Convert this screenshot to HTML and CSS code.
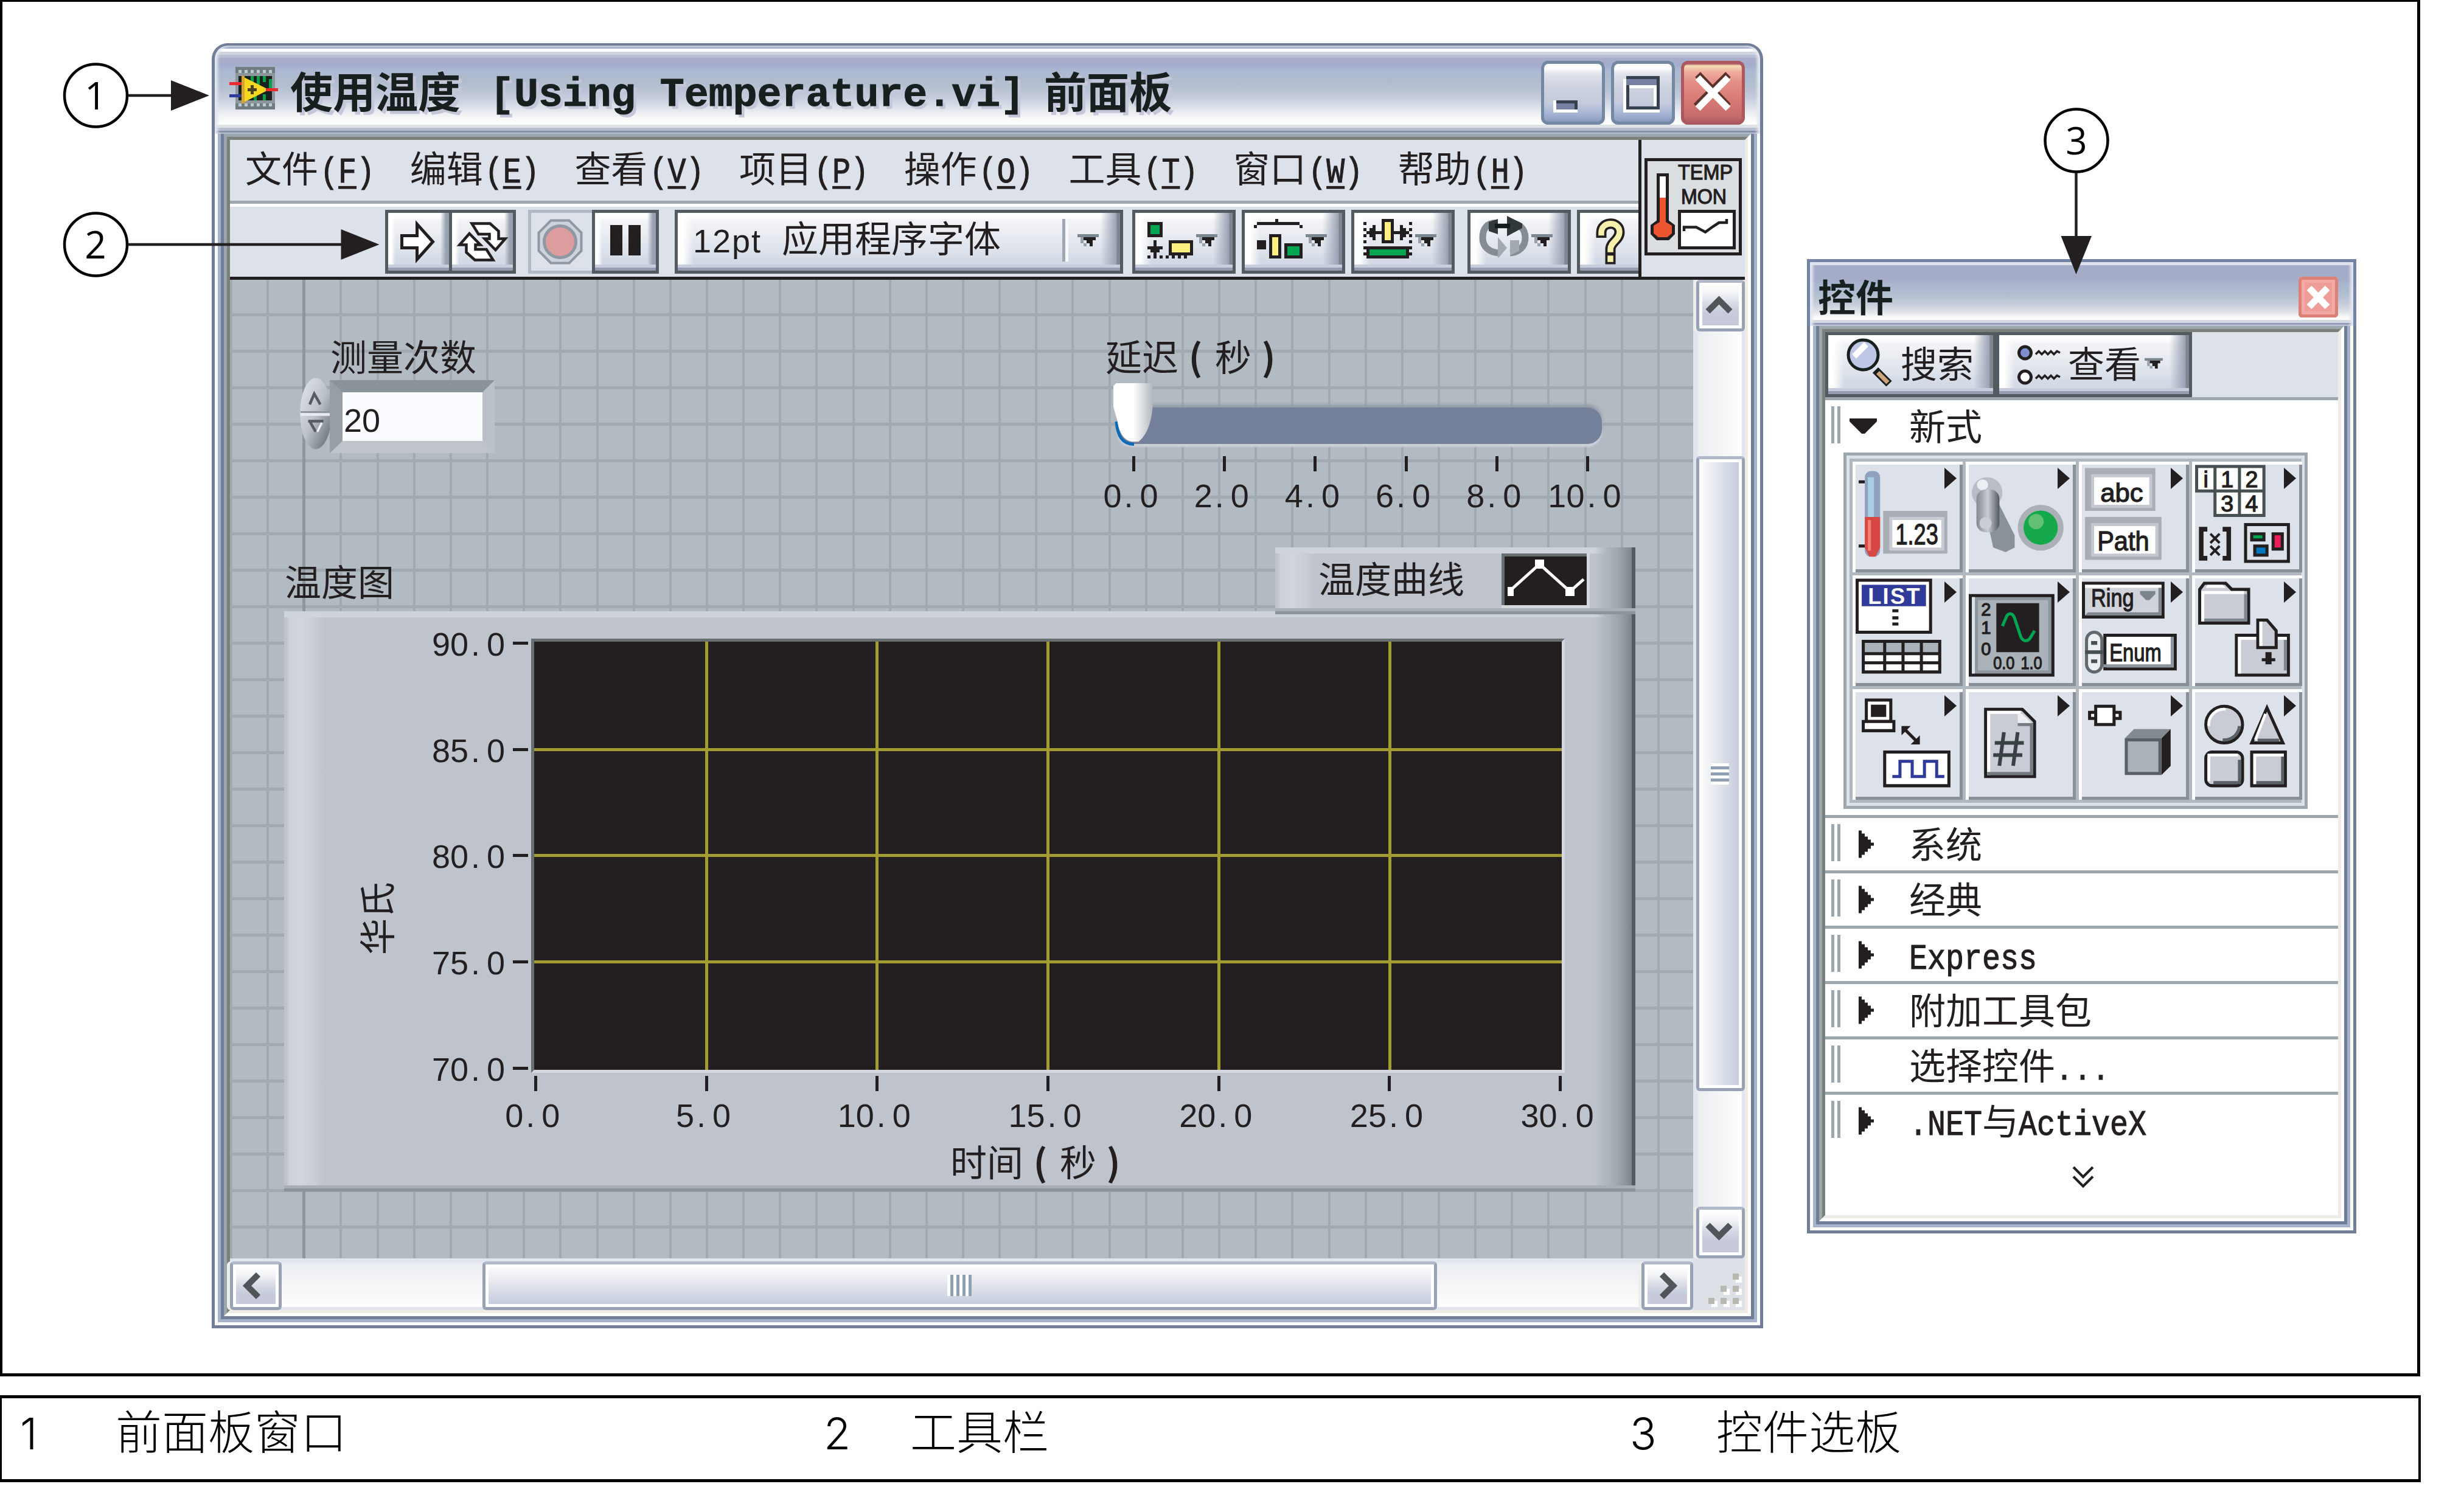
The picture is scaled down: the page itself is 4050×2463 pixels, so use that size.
FILE: index.html
```html
<!DOCTYPE html>
<html lang="zh-CN">
<head>
<meta charset="utf-8">
<title>前面板</title>
<link rel="stylesheet" href="styles.css">
</head>
<body>
<svg class="defs" width="0" height="0">
  <defs>
    <symbol id="drop" viewBox="0 0 7 5"><path d="M0 0H7V1H0Z" fill="#7d8790"/><path d="M1 1H2V3H3V4H2V3H1Z" fill="#98a1ac"/><path d="M2 1H6V2H5V4H4V3H3V2H2Z" fill="#231f20"/><path d="M3 1H5V4H4V3H3Z" fill="#231f20"/></symbol>
    <symbol id="more" viewBox="0 0 5 9"><path d="M0 0H1V1H2V2H3V3H4V4H5V5H4V6H3V7H2V8H1V9H0Z" fill="#231f20"/></symbol>
    <symbol id="chev" viewBox="0 0 9 6"><path d="M.8 5.2 4.5 1.5 8.2 5.2" fill="none" stroke="#4f5558" stroke-width="2"/></symbol>
    <linearGradient id="lever" x1="0" x2="1"><stop offset="0" stop-color="#83898f"/><stop offset=".5" stop-color="#c9ccd3"/><stop offset="1" stop-color="#52595d"/></linearGradient>
    <linearGradient id="knob" x1="0" x2="1"><stop offset="0" stop-color="#fff"/><stop offset=".5" stop-color="#fff"/><stop offset="1" stop-color="#b4b9c0"/></linearGradient>
    <linearGradient id="spin" x1="0" x2="1" y1="0" y2="1"><stop offset="0" stop-color="#e4e7ec"/><stop offset=".5" stop-color="#bcc1cb"/><stop offset="1" stop-color="#5c6269"/></linearGradient>
  </defs>
</svg>

<main class="page">
  <section class="figure">

    <div class="window vi-window">
      <header class="titlebar">
        <svg class="vi-icon" viewBox="0 0 16 14" shape-rendering="crispEdges">
          <path d="M2 0H15V14H2Z" fill="#717b80"/><path d="M2 2H15V12H2Z" fill="#8d969c"/>
          <path d="M3 1.5H15M3 12.5H15" stroke="#b7cbd3" stroke-dasharray="1 1"/>
          <path d="M3 3H14V11H3Z" fill="#19211f"/><path d="M7.5 3V6M9.5 3V7M11.5 3V5M13.5 4V7M8.500 9V11M11.500 9V11" stroke="#0aa04b"/>
          <path d="M4 3 13 7.500 4 12Z" fill="#f6d821" shape-rendering="auto"/><path d="M4 3H5V12H4Z" fill="#d9a42f"/>
          <path d="M7.500 6V9M6 7.500H9" stroke="#4b4220"/>
          <path d="M0 5.500H4M12 7.500H16" stroke="#ed2a2f"/><path d="M0 9.500H4" stroke="#303a98"/>
        </svg>
        <h1 class="title">使用温度<span class="mono"> [Using Temperature.vi] </span>前面板</h1>
        <div class="winbtns">
          <svg class="winbtn" viewBox="0 0 21 21" shape-rendering="crispEdges"><path d="M4 13H5V16H12V17H4Z" fill="#fff"/><path d="M5 13H12V16H5Z" fill="#36424e"/><path d="M5 14H11V16H5Z" fill="#7780a3"/></svg>
          <svg class="winbtn" viewBox="0 0 21 21" shape-rendering="crispEdges"><path d="M4 6H5V16H16V17H4Z" fill="#fff"/><path d="M5.500 5.500H15.500V15.500H5.500Z" fill="none" stroke="#36424e"/><path d="M5 6H15V8H5Z" fill="#7780a3"/><path d="M6 8H15V15H14V9H6Z" fill="#fff"/></svg>
          <svg class="winbtn winbtn-close" viewBox="0 0 21 21"><path d="M5.500 4.500 15.500 15M15.500 4.500 5 15" stroke="#5a322c" stroke-width="2.400"/><path d="M5.500 5.500 15.500 15.700M15.500 5.500 5.500 15.700" stroke="#fff" stroke-width="2.200"/></svg>
        </div>
      </header>
      <div class="frame"><div class="bevel"><div class="content">
        <div class="top">
          <div class="bars">
            <nav class="menubar">
              <span class="menu">文件<span class="mono">(<u>F</u>)</span></span>
              <span class="menu">编辑<span class="mono">(<u>E</u>)</span></span>
              <span class="menu">查看<span class="mono">(<u>V</u>)</span></span>
              <span class="menu">项目<span class="mono">(<u>P</u>)</span></span>
              <span class="menu">操作<span class="mono">(<u>O</u>)</span></span>
              <span class="menu">工具<span class="mono">(<u>T</u>)</span></span>
              <span class="menu">窗口<span class="mono">(<u>W</u>)</span></span>
              <span class="menu">帮助<span class="mono">(<u>H</u>)</span></span>
            </nav>
            <div class="toolbar">
              <div class="btn run"><svg viewBox="1 1 20 19"><path d="M5.500 8.500H10.500V4.700L15.700 10.500 10.500 16.300V12.500H5.500Z" fill="#fff" stroke="#231f20"/></svg></div>
              <div class="btn cont"><svg viewBox="1 1 20 19"><g fill="#fff" stroke="#231f20" stroke-width=".9"><path id="loop" d="M7.500 4.500H13.500L16.300 7V9.500H18.500L15.300 13.200 11.700 9.500H13.300V8H9.700Z"/><use href="#loop" transform="rotate(180 11 10.500)"/></g></svg></div>
              <div class="btn abort"><svg viewBox="1 1 19 19"><path d="M7.500 3.500H13.500L17.500 7.500V13.500L13.500 17.500H7.500L3.500 13.500V7.500Z" fill="#cdd3da" stroke="#8f99a4" stroke-width=".8"/><circle cx="10.500" cy="10.500" r="5.200" fill="#dd9d9f" stroke="#8f99a4"/></svg></div>
              <div class="btn pause"><svg viewBox="1 1 20 19" shape-rendering="crispEdges"><path d="M6 5H10V15H6ZM12 5H16V15H12Z" fill="#231f20"/></svg></div>
              <div class="btn fontring"><span class="ringtext"><span class="num">12pt</span>应用程序字体</span><span class="split"></span><svg class="caret"><use href="#drop"/></svg></div>
              <div class="btn tool align"><svg viewBox="1 1 32 19" shape-rendering="crispEdges"><path d="M5 4H10V9H5Z" fill="#231f20"/><path d="M6 5H9V8H6Z" fill="#00a551"/><path d="M7 10H8V12H10V13H9V14H8V15H7V14H6V13H5V12H7Z" fill="#231f20"/><path d="M5 15.500H19" stroke="#231f20" stroke-dasharray="1 1"/><path d="M12 10H20V15H12Z" fill="#231f20"/><path d="M13 11H19V14H13Z" fill="#fbf080"/><use href="#drop" x="21" y="8" width="7" height="5"/></svg></div>
              <div class="btn tool"><svg viewBox="1 1 32 19" shape-rendering="crispEdges"><path d="M4 6V5H5V4H11V3H12V4H19V5H20V6H19V5H5V6Z" fill="#231f20"/><path d="M5 10H8V13H5ZM9 8H13V16H9ZM14 11H20V16H14Z" fill="#231f20"/><path d="M10 9H12V15H10Z" fill="#fbf080"/><path d="M15 12H19V15H15Z" fill="#00a551"/><use href="#drop" x="21" y="8" width="7" height="5"/></svg></div>
              <div class="btn tool"><svg viewBox="1 1 32 19" shape-rendering="crispEdges"><path d="M4.500 4V11M19.500 4V11" stroke="#231f20" stroke-dasharray="1 1"/><path d="M10 3H14V11H10ZM5 7H6V6H7V5H8V7H16V5H17V6H18V7H19V8H18V9H17V10H16V8H8V10H7V9H6V8H5ZM4 12H20V13H19V14H20V15H19V16H5V15H4V14H5V13H4Z" fill="#231f20"/><path d="M11 4H13V10H11Z" fill="#fbf080"/><path d="M6 13H18V15H6Z" fill="#00a551"/><use href="#drop" x="21" y="8" width="7" height="5"/></svg></div>
              <div class="btn tool reorder"><svg viewBox="1 1 32 19"><path d="M10.500 14.200C7 14 5 12 5 9.300 5 6 6.500 4.300 9.500 4.300" fill="none" stroke="#858d94" stroke-width="2.200"/><path d="M13.500 4.300C17 4.300 19 6 19 9.300 19 12 17 14 14 14.200" fill="none" stroke="#858d94" stroke-width="2.200"/><path d="M7 4 10 3V8L7 7ZM13 2 18 4.500V6L13 8.700Z" fill="#303839"/><path d="M9 5.300H14" stroke="#111b1b" stroke-width="1.500"/><path d="M10 9V16L13 12.500ZM14 10H17V13.500L14 15Z" fill="#a3a9b0"/><use href="#drop" x="21" y="8" width="7" height="5"/></svg></div>
              <div class="btn tool help"><svg viewBox="1 1 32 19"><g fill="none" stroke-linecap="square"><path d="M8 7.500C8 3.600 14 3.600 14 7.300 14 10 11 10.500 11 13M11 16V16.200" stroke="#231f20" stroke-width="3.400"/><path d="M8 7.500C8 3.600 14 3.600 14 7.300 14 10 11 10.500 11 13M11 16V16.200" stroke="#f7f0ad" stroke-width="1.900"/></g></svg></div>
            </div>
          </div>
          <div class="iconpane">
            <svg viewBox="0 0 32 32">
              <path d="M.5.500H31.500V31.500H.5Z" fill="#dadee1" stroke="#231f20"/>
              <path d="M4 5H8V20.500L10 22V25L8 27H4L2 25V22L4 20.500Z" fill="#231f20"/><path d="M5 6H7V13H5Z" fill="#fff"/><path d="M5 13H7V21L9 22.200V24.700L7.500 26H4.500L3 24.700V22.200L5 21Z" fill="#eb5530"/>
              <path d="M11.500 17.500H29.500V29.500H11.500Z" fill="#fff" stroke="#231f20"/><path d="M13 24V22.700H17L20 24.300 22.500 22.500 24.500 21.200H27V20" fill="none" stroke="#231f20" stroke-width=".9"/>
              <text class="px" x="11" y="7" font-size="7" textLength="18" lengthAdjust="spacingAndGlyphs">TEMP</text>
              <text class="px" x="12" y="15" font-size="7" textLength="15" lengthAdjust="spacingAndGlyphs">MON</text>
            </svg>
          </div>
        </div>

        <div class="work">
          <div class="panel">
            <div class="label count-label">测量次数</div>
            <svg class="spinner" viewBox="0 0 11 24"><ellipse cx="5.500" cy="12" rx="5.200" ry="11.700" fill="url(#spin)"/><path d="M.5 12.300H10.500" stroke="#e9ebf0" stroke-width=".9"/><path d="M.5 11.500H10.500" stroke="#8f959d" stroke-width=".6"/><path d="M3.500 9 5 5.500 7 9" fill="none" stroke="#555b61" stroke-width=".9"/><path d="M3 14.500H8M3.500 14.500 5.500 18" stroke="#555b61" stroke-width=".9"/><path d="M6 18 7.500 15" stroke="#eef0f4" stroke-width=".7"/></svg>
            <div class="numeric num">20</div>

            <div class="label delay-label">延迟<span class="paren">(</span>秒<span class="paren">)</span></div>
            <div class="slider"></div>
            <svg class="thumb" viewBox="0 0 14 21"><path d="M1 13C1.500 18 3 20.700 7 20.700" fill="none" stroke="#0b6bb6" stroke-width="1"/><path d="M1 0H12.500L13.300 1V8C12.800 14 11 18 8.500 19.800H6.500C3.700 19.500 2 17 1.400 13L0 8V1Z" fill="url(#knob)"/></svg>
            <div class="scale num">
              <span>0<i>.</i>0</span><span>2<i>.</i>0</span><span>4<i>.</i>0</span><span>6<i>.</i>0</span><span>8<i>.</i>0</span><span>10<i>.</i>0</span>
            </div>

            <div class="label graph-label">温度图</div>
            <div class="graph">
              <div class="yaxis num"><span>90<i>.</i>0</span><span>85<i>.</i>0</span><span>80<i>.</i>0</span><span>75<i>.</i>0</span><span>70<i>.</i>0</span></div>
              <div class="plot"></div>
              <div class="xaxis num"><span>0<i>.</i>0</span><span>5<i>.</i>0</span><span>10<i>.</i>0</span><span>15<i>.</i>0</span><span>20<i>.</i>0</span><span>25<i>.</i>0</span><span>30<i>.</i>0</span></div>
              <div class="label xtitle">时间<span class="paren">(</span>秒<span class="paren">)</span></div>
              <div class="label ytitle">华氏</div>
            </div>
            <div class="plotlegend"><span class="label">温度曲线</span>
              <svg viewBox="0 0 29 18" shape-rendering="crispEdges"><path d="M0 0H29V18H0Z" fill="#d4d7dd"/><path d="M0 0H28V17H0Z" fill="#666e70"/><path d="M1 1H28V17H1Z" fill="#231f20"/><path d="M2.500 12.500 12.500 3.500 22.500 12.500 27 8.500" fill="none" stroke="#fff" shape-rendering="auto"/><path d="M2 11H4V14H2ZM11 2H14V5H11ZM21 11H24V14H21Z" fill="#fff"/></svg>
            </div>
          </div>

          <div class="vscroll">
            <div class="sbtn"><svg viewBox="0 0 9 6"><use href="#chev"/></svg></div>
            <div class="vthumb"><span></span></div>
            <div class="sbtn"><svg class="r180" viewBox="0 0 9 6"><use href="#chev"/></svg></div>
          </div>
          <div class="hscroll">
            <div class="sbtn"><svg class="r270" viewBox="0 0 9 6"><use href="#chev"/></svg></div>
            <div class="hthumb"><span></span></div>
            <div class="sbtn"><svg class="r90" viewBox="0 0 9 6"><use href="#chev"/></svg></div>
          </div>
          <div class="corner"><svg viewBox="0 0 17 17" shape-rendering="crispEdges"><path d="M14 6H16V8H14ZM10 10H12V12H10ZM14 10H16V12H14ZM6 14H8V16H6ZM10 14H12V16H10ZM14 14H16V16H14Z" fill="#fff"/><path d="M13 5H15V7H13ZM9 9H11V11H9ZM13 9H15V11H13ZM5 13H7V15H5ZM9 13H11V15H9ZM13 13H15V15H13Z" fill="#b8b8b2"/></svg></div>
        </div>
      </div></div></div>
    </div>

    <div class="window palette">
      <header class="titlebar small">
        <h2 class="title">控件</h2>
        <svg class="pclose" viewBox="0 0 13 13"><path d="M3.500 3.500 9.500 9.700M9.500 3.500 3.500 9.700" stroke="#fff" stroke-width="2.200"/></svg>
      </header>
      <div class="frame"><div class="bevel"><div class="content">
        <div class="ptools">
          <div class="btn search"><svg viewBox="0 0 15 16"><circle cx="5.500" cy="5.500" r="4.900" fill="#bfc7e6" stroke="#17201f"/><path d="M2.500 6 6.500 2" stroke="#fff" stroke-width="2"/><path d="M9.500 10.500 14 15" stroke="#17201f" stroke-width="2.600"/><path d="M10.300 11.300 13.600 14.600" stroke="#cfa37b" stroke-width="1.400"/></svg><span>搜索</span></div>
          <div class="btn view"><svg viewBox="0 0 14 13"><circle cx="2.500" cy="2.500" r="2" fill="#7f8fcd" stroke="#231f20"/><circle cx="2.500" cy="10.500" r="2" fill="#fff" stroke="#231f20"/><path d="M6 3 7 2 8 3 9 2 10 3 11 2 12 3 13 2 14 2.500M6 11 7 10 8 11 9 10 10 11 11 10 12 11 13 10 14 10.500" fill="none" stroke="#231f20" stroke-width=".7"/></svg><span>查看</span><svg class="caret"><use href="#drop"/></svg></div>
        </div>
        <div class="cat open"><div class="cathead"><span class="grip"></span><svg class="tri" viewBox="0 0 9 5"><path d="M0 0H9V1L5 5H4L0 1Z" fill="#231f20"/></svg><span class="name">新式</span></div>
          <div class="grid">
            <div class="cell"><svg viewBox="0 0 36 36">
              <path d="M2 6.500H4M2 27.500H4" stroke="#231f20"/><rect x="4" y="3" width="5" height="28" rx="2" fill="#8ea2c0"/><path d="M5 5H7V18H5Z" fill="#a9cfe2"/><path d="M4 18H9V28L7.500 31H5.500L4 28Z" fill="#d94744"/><path d="M5 19H6V29H5Z" fill="#f58079"/>
              <path d="M10 16H31V30H10Z" fill="#a9adb4"/><path d="M12 18H30V29H12Z" fill="#c9ccd4"/><path d="M13 19H29V28H13Z" fill="#fff"/><text class="px" x="14" y="27" font-size="9.500" textLength="14" lengthAdjust="spacingAndGlyphs">1.23</text></svg></div>
            <div class="cell"><svg viewBox="0 0 36 36">
              <path d="M7 19 11 14 16 24V28L13 29.500 9 28Z" fill="#8b9198"/><circle cx="7" cy="10" r="5" fill="#b9bdc5"/><circle cx="5.500" cy="7.500" r="1.800" fill="#eceef1"/><rect x="3.500" y="9" width="7.500" height="14" rx="3" fill="url(#lever)"/><circle cx="6.500" cy="20" r="2" fill="#c9cdd6"/>
              <circle cx="24.500" cy="21.500" r="7.500" fill="#abb0b7"/><circle cx="24.500" cy="21.500" r="5.600" fill="#15a94b"/><circle cx="23" cy="19.500" r="2.500" fill="#63c073"/></svg></div>
            <div class="cell"><svg viewBox="0 0 36 36">
              <path d="M2 2H25V16H2ZM2 18H27V32H2Z" fill="#a9adb4"/><path d="M4 4H24V15H4ZM4 20H26V31H4Z" fill="#c3c7cf"/><path d="M5 5H23V14H5ZM5 21H25V30H5Z" fill="#fff"/><text class="px" x="7" y="13" font-size="8.500" textLength="14" lengthAdjust="spacingAndGlyphs">abc</text><text class="px" x="6" y="29" font-size="9" textLength="17" lengthAdjust="spacingAndGlyphs">Path</text></svg></div>
            <div class="cell"><svg viewBox="0 0 36 36">
              <path d="M1 1H24V18H7V10H1Z" fill="#475052"/><path d="M2 2H7V9H2ZM8 2H15V9H8ZM16 2H23V9H16ZM8 10H15V17H8ZM16 10H23V17H16Z" fill="#fff"/>
              <g class="px" font-size="7.500" text-anchor="middle"><text x="4.500" y="8.200">i</text><text x="11.500" y="8.200">1</text><text x="19.500" y="8.200">2</text><text x="11.500" y="16.200">3</text><text x="19.500" y="16.200">4</text></g>
              <path d="M5 22H3V31.500H5M10 22H12V31.500H10" fill="none" stroke="#231f20" stroke-width="1.500"/><path d="M6 23.500 9 26.500M9 23.500 6 26.500M6 27.500 9 30.500M9 27.500 6 30.500" stroke="#231f20" stroke-width=".8"/>
              <path d="M17.500 20.500H31.500V32.500H17.500Z" fill="#dde1e9" stroke="#231f20"/><path d="M19 23H24V26H19ZM26 23H30V29H26ZM20 27H25V31H20Z" fill="#231f20"/><path d="M20 24H23V25H20Z" fill="#00a551"/><path d="M27 24H29V28H27Z" fill="#ee1d5b"/><path d="M21 28H24V30H21Z" fill="#0077c0"/></svg></div>
            <div class="cell"><svg viewBox="0 0 36 36">
              <path d="M1.500 1.500H25.500V18.500H1.500Z" fill="#fff" stroke="#231f20"/><path d="M3 3H24V10H3Z" fill="#303a98"/><text class="px wht" x="5" y="9.200" font-size="7.200" textLength="17">LIST</text><path d="M13 11H15V12H13ZM13 13.300H15V14.300H13ZM13 15.300H15V16.300H13Z" fill="#231f20"/>
              <path d="M3 21H29V32H3Z" fill="#231f20"/><path d="M4 22H10V25H4ZM11 22H16V25H11ZM17 22H22V25H17ZM23 22H28V25H23Z" fill="#a9b1b9"/><path d="M4 26H10V28H4ZM11 26H16V28H11ZM17 26H22V28H17ZM23 26H28V28H23ZM4 29H10V31H4ZM11 29H16V31H11ZM17 29H22V31H17ZM23 29H28V31H23Z" fill="#fff"/></svg></div>
            <div class="cell"><svg viewBox="0 0 36 36">
              <path d="M1 6H29V33H1Z" fill="#231f20"/><path d="M2 7H28V32H2Z" fill="#8d959d"/><path d="M2 7H3V32H2Z" fill="#dde1e9"/><path d="M4 8H27V31H4Z" fill="#a9b1b9"/><path d="M10 9H24V25H10Z" fill="#231f20"/><path d="M12 16.500 13.500 13C14.500 12 15.500 12.500 16 14L18 20C18.700 21.500 20 21.700 21 20.500L22.500 18" fill="none" stroke="#00a551"/>
              <g class="px" font-size="5.800"><text x="5" y="13">2</text><text x="5" y="19">1</text><text x="5" y="26">0</text><text x="9" y="30.500" textLength="7" lengthAdjust="spacingAndGlyphs">0.0</text><text x="18" y="30.500" textLength="7" lengthAdjust="spacingAndGlyphs">1.0</text></g></svg></div>
            <div class="cell"><svg viewBox="0 0 36 36">
              <path d="M1.500 2.500H27.500V13.500H1.500Z" fill="#d0d3da" stroke="#231f20"/><path d="M2 3H27V4H2Z" fill="#fff"/><path d="M3 12H26V4H27V13H2Z" fill="#7f878e"/><text class="px" x="4" y="10" font-size="8" textLength="14" lengthAdjust="spacingAndGlyphs">Ring</text><path d="M20 5H25V6L23 8H22L20 6Z" fill="#7d858c"/>
              <path d="M8.500 19.500H31.500V30.500H8.500Z" fill="#fff" stroke="#231f20"/><path d="M30 20H31V30H8V29H30Z" fill="#8d959d"/><rect x="2.500" y="18.500" width="5" height="13" rx="2.500" fill="#eceef2" stroke="#606a6d"/><path d="M2 25H8M4 22H6M4 28H6" stroke="#475052" stroke-width="1.200"/><text class="px" x="10" y="28" font-size="8" textLength="17" lengthAdjust="spacingAndGlyphs">Enum</text></svg></div>
            <div class="cell"><svg viewBox="0 0 36 36">
              <path d="M2.500 15.500V4.500L4 2.500H11L13 4.500H18.500V15.500Z" fill="#c9ccd4" stroke="#231f20"/><path d="M3 5H17V6H4V15H3ZM4.500 4 5 3H10L11 4Z" fill="#fff"/><path d="M4 14H17V6H18V15H4Z" fill="#7f878e"/>
              <path d="M14.500 32.500V19.500H31.500V32.500Z" fill="#c9ccd4" stroke="#231f20"/><path d="M15 20H16V32H15ZM16 20H31V21H16Z" fill="#fff"/><path d="M16 31H31V21H30V31Z" fill="#7f878e"/><path d="M21.500 23.500V14.500H24.500L27.500 18V23.500Z" fill="#c9ccd4" stroke="#231f20"/><path d="M22 15H23V23H22Z" fill="#fff"/><path d="M24 25H26V27H27.200V28H26V29H24V28H22.800V27H24Z" fill="#231f20"/></svg></div>
            <div class="cell"><svg viewBox="0 0 36 36">
              <path d="M4.500 3.500H12.500V10.500H4.500Z" fill="#fff" stroke="#231f20"/><path d="M6 5H11V9H6Z" fill="#231f20"/><path d="M3.500 10.500H13.500V13.500H3.500Z" fill="#fff" stroke="#231f20"/><path d="M17 13 21.500 17.500" stroke="#231f20"/><path d="M16 12H19L16 15ZM22 15V18H19Z" fill="#231f20"/>
              <path d="M10.500 20.500H31.500V31.500H10.500Z" fill="#fff" stroke="#231f20"/><path d="M13 28.500H15.500V23.500H19.500V28.500H23.500V23.500H27.500V28.500H30" fill="none" stroke="#303a98"/></svg></div>
            <div class="cell"><svg viewBox="0 0 36 36">
              <path d="M6.500 6.500H18.500L22.500 10.500V28.500H6.500Z" fill="#c9ccd4" stroke="#231f20"/><path d="M7 7H18V8H8V28H7Z" fill="#fff"/><path d="M7 27H22V28H7ZM21 12H22V28H21ZM17 11H22V12H17Z" fill="#737b80"/><path d="M17 8H18.500L21.500 11H17Z" fill="#eceef2"/><path d="M12.500 14 11 25M17 14 15.500 25M9.500 17.500H19M9 21.500H18.500" stroke="#3a4143" stroke-width="1.200"/></svg></div>
            <div class="cell"><svg viewBox="0 0 36 36">
              <path d="M5.500 5.500H11.500V11.500H5.500ZM3.500 7.500H5.500V9.500H3.500ZM11.500 7.500H13.500V9.500H11.500Z" fill="#fff" stroke="#231f20"/><path d="M15 16 18 13H30L27 16Z" fill="#838b92"/><path d="M27 16 30 13V25L27 28Z" fill="#231f20"/><path d="M15.500 16.500H26.500V27.500H15.500Z" fill="#a9b1b9" stroke="#596164"/></svg></div>
            <div class="cell"><svg viewBox="0 0 36 36">
              <g fill="#c9ccd4" stroke="#231f20"><circle cx="10.500" cy="11.500" r="6"/><path d="M24.500 6 29.700 17.500H19.500Z"/><rect x="4.500" y="20.500" width="12" height="11" rx="2"/><path d="M19.500 20.500H30.500V31.500H19.500Z"/></g><g fill="none" stroke="#fff" stroke-width=".9"><path d="M5.500 12A5 5 0 0 1 11 6.500M24 8 20.700 16.500M5.500 30V21.500H15M20.500 31V21.500H30"/></g><g fill="none" stroke="#596164"><path d="M15.500 12A5 5 0 0 1 10 16.500M21.500 16.600H28.500M7 30.500H15.500V23M21 30.500H29.600V22"/></g></svg></div>
          </div>
        </div>
        <div class="cat"><div class="cathead"><span class="grip"></span><svg class="tri right"><use href="#more"/></svg><span class="name">系统</span></div></div>
        <div class="cat"><div class="cathead"><span class="grip"></span><svg class="tri right"><use href="#more"/></svg><span class="name">经典</span></div></div>
        <div class="cat"><div class="cathead"><span class="grip"></span><svg class="tri right"><use href="#more"/></svg><span class="name"><span class="mono">Express</span></span></div></div>
        <div class="cat"><div class="cathead"><span class="grip"></span><svg class="tri right"><use href="#more"/></svg><span class="name">附加工具包</span></div></div>
        <div class="cat"><div class="cathead"><span class="grip"></span><span class="tri right"></span><span class="name">选择控件<span class="mono dots">...</span></span></div></div>
        <div class="cat"><div class="cathead"><span class="grip"></span><svg class="tri right"><use href="#more"/></svg><span class="name"><span class="mono">.NET</span>与<span class="mono">ActiveX</span></span></div></div>
        <svg class="expand" viewBox="0 0 7 7"><path d="M.4.400 3.500 3.500 6.600.4M.4 3.400 3.500 6.500 6.600 3.400" fill="none" stroke="#231f20" stroke-width=".8"/></svg>
      </div></div></div>
    </div>

    <svg class="callouts" viewBox="0 0 3978 2263">
      <g fill="#fff" stroke="#000" stroke-width="4.500"><circle cx="157.500" cy="157" r="51.500"/><circle cx="157.500" cy="402" r="51.500"/><circle cx="3413" cy="231" r="51.500"/></g>
      <path d="M211 157H290M211 402H570M3412.500 284V395" stroke="#231f20" stroke-width="4.500"/>
      <path d="M281 132 344 157 281 182ZM560.500 377 623.500 402 560.500 427ZM3387.500 388H3438L3412.500 451Z" fill="#231f20"/>
      <g class="callnum"><text x="157" y="180">1</text><text x="157" y="425">2</text><text x="3413" y="254">3</text></g>
    </svg>
  </section>

  <footer class="key">
    <div class="keyitem"><span class="keynum">1</span><span>前面板窗口</span></div>
    <div class="keyitem"><span class="keynum">2</span><span>工具栏</span></div>
    <div class="keyitem"><span class="keynum">3</span><span>控件选板</span></div>
  </footer>
</main>
</body>
</html>
```

FILE: styles.css
```css
*{box-sizing:border-box}
html,body{margin:0;background:#fff}
body{width:4050px;height:2463px;overflow:hidden;color:#231f20;font:60px/60px "Noto Sans CJK SC",sans-serif}
svg{display:block;overflow:visible}
.defs{position:absolute}
h1,h2{margin:0;font-size:inherit;font-weight:700}

.page{display:flex;flex-direction:column;gap:31px}
.figure{position:relative;width:3978px;height:2263px;border:4px solid #000;border-width:3px 5px 5px 4px}
.callouts{position:absolute;z-index:5;left:-4px;top:-3px;width:3978px;height:2263px;pointer-events:none}
.callnum{font:62px "Open Sans","Noto Sans",sans-serif;text-anchor:middle;fill:#000}

/* shared text faces */
.mono{display:inline-block;font:50px/50px "Liberation Mono",monospace;white-space:pre;transform:scaleY(1.18);transform-origin:50% 38px;-webkit-text-stroke:1px}
.num{font:54px/60px "Liberation Sans",sans-serif}
.num i{display:inline-block;width:30px;font-style:normal;padding-left:4px}
.px{font-family:"Liberation Sans",sans-serif;fill:#231f20;stroke:#231f20;stroke-width:.25px}
.wht{fill:#fff;font-weight:700;stroke:none}
.label{font:60px/60px "Noto Sans CJK SC",sans-serif;white-space:nowrap}
.paren{display:inline-block;width:60px;text-align:center;font-weight:700;padding-right:4px}

/* windows */
.window{position:absolute;display:flex;flex-direction:column}
.vi-window{left:344px;top:68px;width:2550px;height:2113px}
.palette{left:2966px;top:423px;width:903px;height:1602px}
.titlebar{position:relative;z-index:1;flex:none;display:flex;height:149px;padding-left:29px;border:5px solid #727e98;border-top-width:4px;border-bottom:0;border-radius:26px 26px 0 0;
  background:linear-gradient(#a3abc8 0 5px,#fff 5px 10px,#cfd3e0 10px 15px,#b7bdd4 15px 20px,#a8aeca 20px 25px,#a2abca 30px,#adb9d3 42px,#afbbcc 55px,#b6c1d2 70px,#c5cbdc 85px,#d6dde5 98px,#ebedf1 110px,#f7f8f8 120px,#fff 128px 130px,#dde2e4 130px 135px,#b7bdd2 135px 140px,#7a87a3 140px);
  box-shadow:inset 5px 0 4px #e4e7ef,inset -5px 0 4px #e4e7ef}
.titlebar.small{height:110px;border:5px solid #7383a3;border-bottom:0;border-radius:0;padding-left:13px;
  background:linear-gradient(#dbe0ea 0 5px,#a5acc8 5px 30px,#a9b4cf 35px,#b3becf 55px,#c8cfdb 70px,#e0e3e9 82px,#fff 92px 95px,#d5d9e2 95px 100px,#8c98b5 100px)}
.frame{flex:1;margin-top:-20px;padding:20px;background:#fff;box-shadow:inset 0 0 0 5px #727e98,inset 0 0 0 10px #fafcfb,inset 0 0 0 15px #a6b1ca,inset 0 0 0 20px #727e98}
.bevel{height:100%;border:5px solid;border-color:#9ca7ad #fff #fff #9ca7ad}
.content{height:100%;border:5px solid;border-color:#7b807a #efece6 #efece6 #7b807a;background:#fff}
.title{font-size:70px;line-height:80px;color:#17201f;white-space:nowrap}
.vi-window .title{margin:33px 0 0 20px;text-shadow:5px 5px 0 #c5c6da}
.title .mono{display:inline;font-size:66.600px;line-height:1;font-weight:700;position:relative;left:8px;top:-4px}
.small .title{font-size:62px;line-height:70px;margin:20px 0 0}
.vi-icon{width:80px;height:70px;margin-top:35px;margin-left:-5px}
.winbtns{display:flex;gap:10px;margin:25px 25px 0 auto}
.winbtn{width:105px;height:105px;border-radius:12px;box-shadow:inset 0 0 0 5px #7388a3;background:linear-gradient(#7388a3 5px,#fff 5px 12px,#dfe2ea 22px,#cdd1de 45px,#c3cadb 70px,#aab6d6 85px,#8193ba)}
.winbtn-close{box-shadow:inset 0 0 0 5px #ab5860;background:linear-gradient(#ab5860 5px,#f3dfb4 8px,#eeae9d 18px,#e48f87 35px,#d87873 65px,#c66d6d 90px,#a9565f)}
.pclose{width:65px;height:67px;margin:24px 25px 0 auto;border-radius:6px;background:#ee9d99;box-shadow:inset 0 0 0 5px #dc8078,inset 0 -5px 0 #a9675f,inset 0 0 0 10px #f3aaa6}

/* menu and tool bars */
.top{display:flex;height:230px;background:#dde1e9;border-bottom:5px solid #231f20}
.bars{width:2315px;overflow:hidden}
.menubar{display:flex;gap:60.700px;height:110px;padding:14px 0 0 25px;border-bottom:5px solid #fff;box-shadow:inset 0 -5px 0 #9da7ae}
.menu{display:flex;align-items:baseline;width:210px;white-space:nowrap}
.menu .mono{margin-left:3px}
.menu u{text-decoration-thickness:4px;text-underline-offset:5px}
.toolbar{display:flex;height:115px;padding:5px 0 0 255px}
.btn{flex:none;display:flex;height:105px;border:5px solid #525b5f;
  background:linear-gradient(to top,#969db0 5px,#c8cddd 5px 10px,transparent 10px),linear-gradient(to left,#7d8691 0 5px,#9aa3b3 6px,transparent 32px),linear-gradient(to right,#fff 0 8px,transparent 26px),linear-gradient(#fff 0 5px,#f2f3f6 14px,#e9ecf1 35px,#e0e4ec 55px,#d3dae5 80px)}
.run,.cont,.pause{width:110px}
.run svg,.cont svg,.pause svg{width:100px;height:95px}
.cont{margin-left:-5px}
.run,.cont,.pause{background:linear-gradient(to top,#969db0 5px,#c8cddd 5px 10px,transparent 10px),linear-gradient(to left,#98a1b0 0 5px,transparent 14px),linear-gradient(to right,#fff 0 5px,transparent 12px),linear-gradient(#fff 0 5px,#f2f3f6 14px,#e9ecf1 35px,#e0e4ec 55px,#d3dae5 80px)}
.abort{width:105px;margin-left:20px;border-color:#b0b9c4;border-right:0;background:#dde1e9}
.abort svg{width:95px;height:95px}
.fontring{width:737px;margin-left:26px;padding-left:25px}
.ringtext{display:flex;align-items:baseline;gap:28px;height:60px;margin-top:9px;width:607px}
.ringtext .num{width:118px;letter-spacing:2px}
.split{width:10px;height:70px;margin-top:10px;border-left:5px solid #9fa7b3;border-right:5px solid #f7f8fa}
.caret{width:35px;height:25px;margin:35px 0 0 15px}
.tool{width:170px;margin-left:10px}
.tool svg{width:160px;height:95px}
.align{margin-left:15px}
.reorder{margin-left:21px}
.iconpane{flex:1;padding:30px 0 0 5px;border-left:5px solid #231f20}
.iconpane svg{width:160px;height:160px}

/* panel and scrollbars */
.work{display:grid;grid-template:1609px 85px/2405px 85px}
.panel{position:relative;overflow:hidden;background:linear-gradient(to right,transparent 119px,#8f979e 119px 124px,transparent 124px),repeating-linear-gradient(to right,#a2aab1 0 4px,transparent 4px 60.150px),repeating-linear-gradient(#b2bac2 0 0,transparent 0 55px,#a2aab1 55px 60px),#b2bac2}
.vscroll,.hscroll{display:flex;background:linear-gradient(to right,#e0e4ec 5px,#ebeef1 10px,#fafcfb 70px,#fff 80px,#e2e5ed 80px)}
.vscroll{flex-direction:column;justify-content:space-between;padding-left:5px}
.hscroll{padding-top:5px;justify-content:space-between;background:linear-gradient(#e0e4ec 5px,#ebeef1 10px,#fafcfb 70px,#fff 80px,#e2e5ed 80px)}
.sbtn{flex:none;display:grid;place-items:center;border:5px solid #98a2b7;border-top-color:#b0b9c9;border-radius:6px;box-shadow:inset 0 0 0 5px #fff,-5px 0 0 #eceeea;background:linear-gradient(#fff,#f5f6f8 15px,#d5dae4 35px,#c6cadb 50px)}
.vscroll .sbtn{width:80px;height:85px;padding:0 5px 4px 0}
.hscroll .sbtn{width:85px;height:80px}
.hscroll .sbtn:first-child{padding-right:14px}
.hscroll .sbtn:last-child{padding-left:3px}
.sbtn svg{width:45px;height:30px}
.r90{transform:rotate(90deg)}.r180{transform:rotate(180deg)}.r270{transform:rotate(-90deg)}
.vthumb,.hthumb{display:grid;place-items:center;border:5px solid #98a2b7;border-top-color:#b0b9c9;border-radius:6px;box-shadow:inset 0 0 0 5px #fff}
.vthumb{height:1044px;margin-bottom:-15px;background:linear-gradient(to right,#fff,#eceef1 20px,#d7dbe6 45px,#c6cddd 65px)}
.hthumb{width:1569px;margin-right:7px;background:linear-gradient(#fff,#eceef1 20px,#d7dbe6 45px,#c6cddd 65px)}
.vthumb span{width:30px;height:35px;background:repeating-linear-gradient(#fff 0 5px,#8fa0b4 5px 10px);margin-right:3px}
.hthumb span{width:40px;height:35px;background:repeating-linear-gradient(to right,#fff 0 5px,#8fa0b4 5px 10px);margin-bottom:2px}
.corner{background:#dde0e6}
.corner svg{width:85px;height:85px}

/* controls placed freely on the panel */
.count-label{position:absolute;left:165px;top:94px}
.spinner{position:absolute;left:112px;top:160px;width:58px;height:120px}
.numeric{position:absolute;left:164px;top:165px;width:271px;height:120px;border:20px solid;border-color:#8b939a #bcc1c9 #bfc3cc #979ea6;border-width:20px 20px 20px 21px;background:#fafcff;padding:16px 0 0 2px}
.delay-label{position:absolute;left:1439px;top:94px}
.slider{position:absolute;left:1458px;top:210px;width:797px;height:60px;border-radius:24px;background:#75819a;box-shadow:0 -5px 5px #949ca5,0 5px 3px #cdd0d8}
.thumb{position:absolute;left:1452px;top:170px;width:68px;height:102px}
.scale{position:absolute;left:1411px;top:290px;width:895px;display:grid;grid-template-columns:repeat(6,1fr)}
.scale span,.xaxis span{display:flex;justify-content:center;padding:35px 10px 0 0;background:linear-gradient(#231f20,#231f20) center top/5px 25px no-repeat}
.graph-label{position:absolute;left:90px;top:464px}
.graph{position:absolute;left:89px;top:545px;width:2221px;height:954px;background:linear-gradient(to top,#8c949b 5px,#a8adb6 5px 10px,transparent 10px),linear-gradient(to left,#525b5f 6px,#7d858c 6px,#8c9399 15px,#a0a8ae 30px,#b0b6be 48px,transparent 67px),linear-gradient(#cfd3dc 10px,transparent 10px),linear-gradient(to right,#bfc3cc 5px,#cdd0d9 8px,#d2d5de 28px,#cacdd6 50px,#bfc3cc 65px)}
.yaxis{position:absolute;left:243px;top:-35px;display:grid;grid-auto-rows:174.750px}
.yaxis span{display:flex;align-items:center;width:160px;padding-top:3px;background:linear-gradient(#231f20,#231f20) 133px center/25px 5px no-repeat}
.plot{position:absolute;left:406px;top:45px;width:1699px;height:714px;border:5px solid;border-color:#666e70 #d4d7df #d4d7df #666e70;
  background:linear-gradient(#a39d31,#a39d31) 0 175px/100% 5px no-repeat,linear-gradient(#a39d31,#a39d31) 0 349px/100% 5px no-repeat,linear-gradient(#a39d31,#a39d31) 0 524px/100% 5px no-repeat,repeating-linear-gradient(to right,transparent 0 280.700px,#a39d31 280.700px 285.700px,transparent 285.700px 561.400px,#a39d31 561.400px 566.400px,transparent 566.400px 842.100px,#a39d31 842.100px 847.100px,transparent 847.100px 1122.800px,#a39d31 1122.800px 1127.800px,transparent 1127.800px 1403.500px,#a39d31 1403.500px 1408.500px,transparent 1408.500px 1700px),#231f20}
.xaxis{position:absolute;left:273px;top:764px;width:1965px;display:grid;grid-template-columns:repeat(7,1fr)}
.xtitle{position:absolute;left:1095px;top:873px}
.ytitle{position:absolute;left:90px;top:475px;width:120px;transform:rotate(-90deg)}
.plotlegend{position:absolute;left:1718px;top:440px;width:592px;height:110px;display:flex;padding:10px 0 0 71px;gap:60px;background:linear-gradient(to top,#8c949b 5px,#a8adb6 5px 10px,transparent 10px),linear-gradient(to left,#525b5f 6px,#7d858c 6px,#8c9399 15px,#a0a8ae 30px,#b0b6be 48px,transparent 67px),linear-gradient(#cfd3dc 10px,transparent 10px),linear-gradient(to right,#bfc3cc 5px,#cdd0d9 8px,#d2d5de 28px,#cacdd6 50px,#bfc3cc 65px)}
.plotlegend .label{margin-top:9px;width:241px}
.plotlegend svg{width:145px;height:90px}

/* palette */
.ptools{display:flex;height:112px;padding-bottom:5px;border-bottom:5px solid #9da7ae;background:#dde1e9}
.ptools .btn{height:107px}
.search{width:281px;padding:4px 0 0 30px}
.search svg{width:75px;height:82px}
.search span{margin:10px 0 0 14px}
.view{width:322px;padding:14px 0 0 30px}
.view svg:first-child{width:70px;height:66px;margin-top:2px}
.view span{margin-left:13px}
.view .caret{width:30px;margin:22px 0 0 6px}
.cat{border-bottom:5px solid #9da7ae;height:91px}
.cat:nth-last-child(2){border-bottom:0}
.cat.open{height:687px}
.cathead{display:flex;padding:10px 0 0 10px}
.grip{width:15px;height:61px;border:5px solid #9da7ae;border-width:0 5px}
.tri{width:45px;height:25px;margin:20px 53px 0 15px}
.tri.right{width:25px;height:46px;margin:10px 58px 0 30px}
.name{white-space:nowrap}
.name .dots{transform:none}
.grid{display:grid;grid-template:repeat(3,182px)/repeat(4,181px);gap:5px;width:763px;height:586px;margin:15px 0 0 30px;padding:10px;background:#b0b8c0;border:5px solid #9da7ae;box-shadow:inset 0 0 0 5px #dde1e9}
.cell{position:relative;background:#dde1e9;box-shadow:inset 5px 5px 0 #fff,inset -5px -5px 0 #8a9097}
.cell svg{width:181px;height:182px}
.cell::after{content:"";position:absolute;left:151px;top:10px;width:20px;height:35px;background:#231f20;clip-path:polygon(0 0,100% 50%,0 100%)}
.expand{width:36px;height:36px;margin:26px 0 0 406px}

/* key under the figure */
.key{display:grid;grid-template-columns:1321px 1325px 1fr;width:3979px;height:143px;border:5px solid #000;border-width:5px 4px 5px 3px;color:#000;font-size:76px;font-weight:300;line-height:80px}
.keyitem{display:flex;align-items:baseline;padding:11px 0 0 30px}
.keynum{width:157px;font:300 72px/1 Inter,sans-serif}
.keyitem:nth-child(n+2) .keynum{width:142px}
```
